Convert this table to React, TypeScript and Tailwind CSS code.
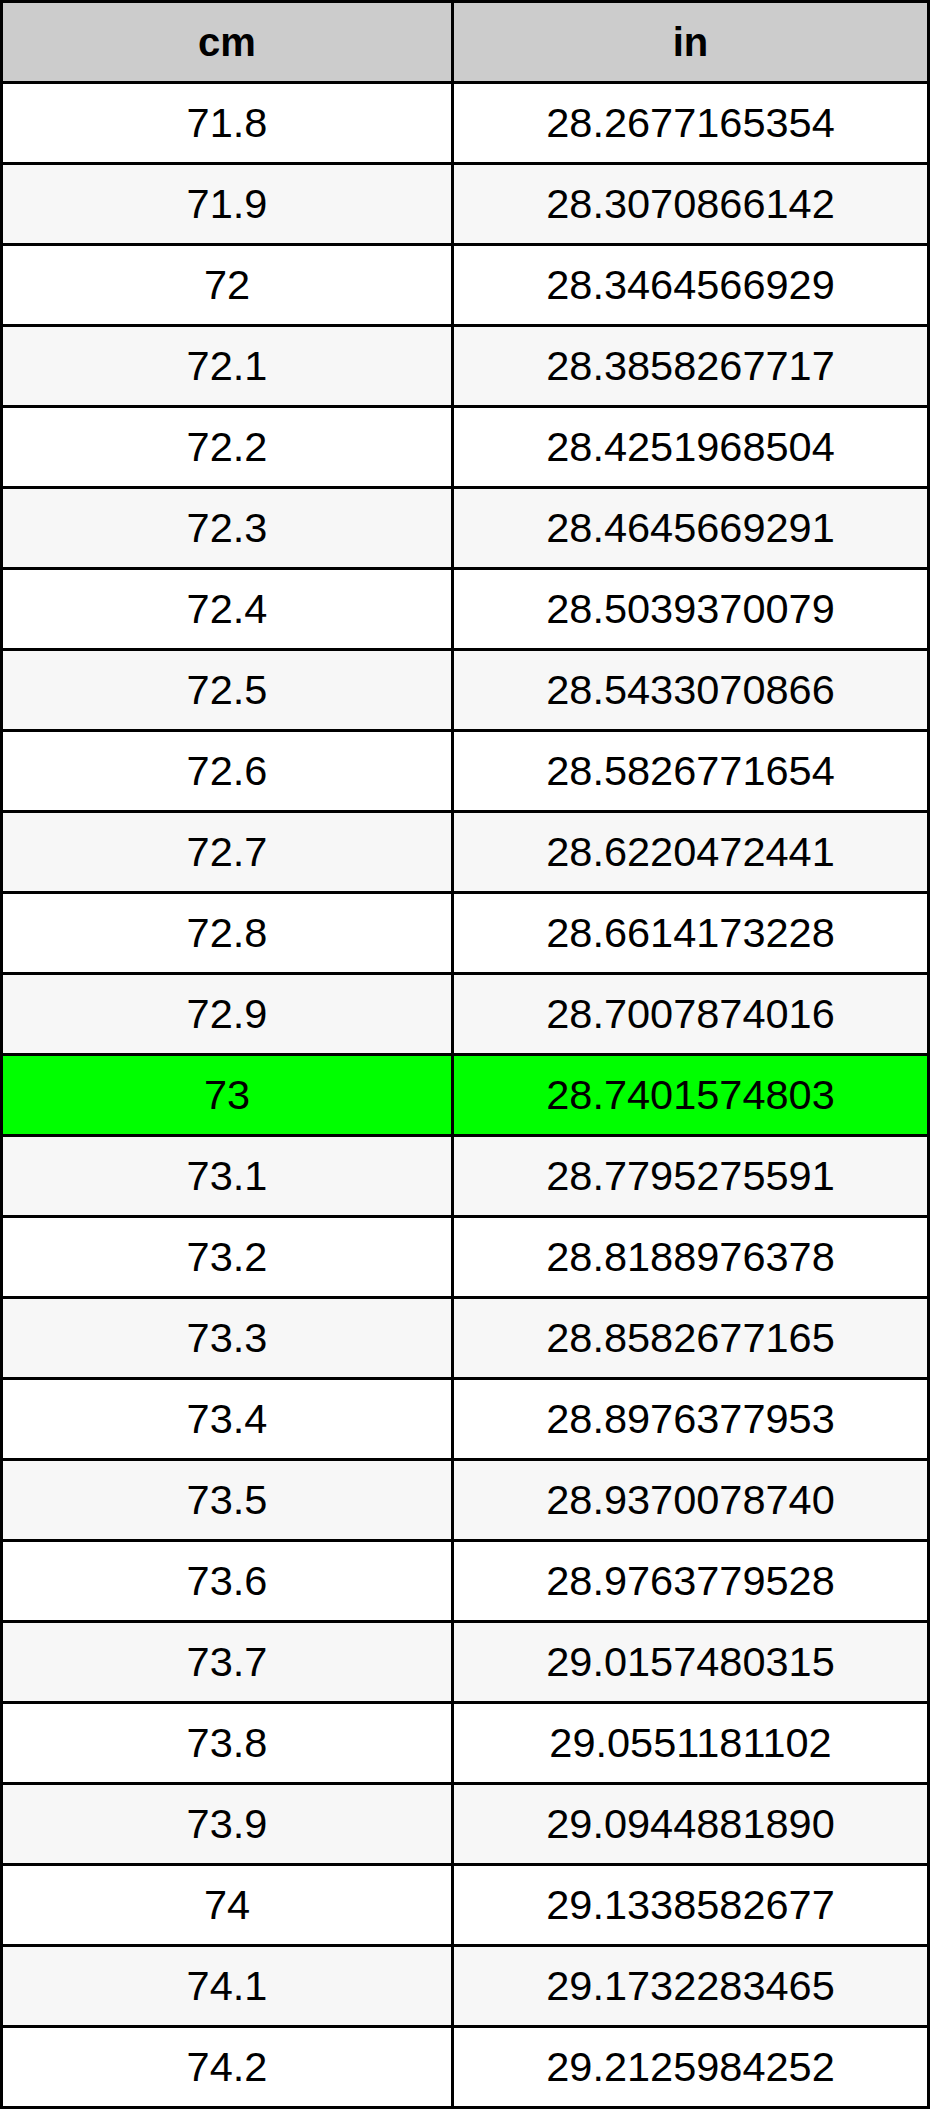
const rows: [string, string][] = [
  ["71.8", "28.2677165354"],
  ["71.9", "28.3070866142"],
  ["72", "28.3464566929"],
  ["72.1", "28.3858267717"],
  ["72.2", "28.4251968504"],
  ["72.3", "28.4645669291"],
  ["72.4", "28.5039370079"],
  ["72.5", "28.5433070866"],
  ["72.6", "28.5826771654"],
  ["72.7", "28.6220472441"],
  ["72.8", "28.6614173228"],
  ["72.9", "28.7007874016"],
  ["73", "28.7401574803"],
  ["73.1", "28.7795275591"],
  ["73.2", "28.8188976378"],
  ["73.3", "28.8582677165"],
  ["73.4", "28.8976377953"],
  ["73.5", "28.9370078740"],
  ["73.6", "28.9763779528"],
  ["73.7", "29.0157480315"],
  ["73.8", "29.0551181102"],
  ["73.9", "29.0944881890"],
  ["74", "29.1338582677"],
  ["74.1", "29.1732283465"],
  ["74.2", "29.2125984252"],
];

export default function App() {
  return (
    <div className="w-[930px] bg-white font-['Liberation_Sans',Arial,sans-serif] text-black">
      <div className="grid grid-cols-[448px_473px] gap-[3px] bg-black p-[3px]">
        {/* Header */}
        <div className="flex h-[78px] items-center justify-center bg-[#cccccc] text-[40px] font-bold">
          cm
        </div>
        <div className="flex h-[78px] items-center justify-center bg-[#cccccc] text-[40px] font-bold">
          in
        </div>

        {/* Rows */}
        {rows.map(([cm, inch], i) => {
          const bg =
            cm === "73" ? "bg-[#00ff00]" : i % 2 === 0 ? "bg-white" : "bg-[#f7f7f7]";
          return [
            <div
              key={`c${i}`}
              className={`flex h-[78px] items-center justify-center text-[41.5px] ${bg}`}
            >
              {cm}
            </div>,
            <div
              key={`i${i}`}
              className={`flex h-[78px] items-center justify-center text-[41.5px] ${bg}`}
            >
              {inch}
            </div>,
          ];
        })}
      </div>
    </div>
  );
}
